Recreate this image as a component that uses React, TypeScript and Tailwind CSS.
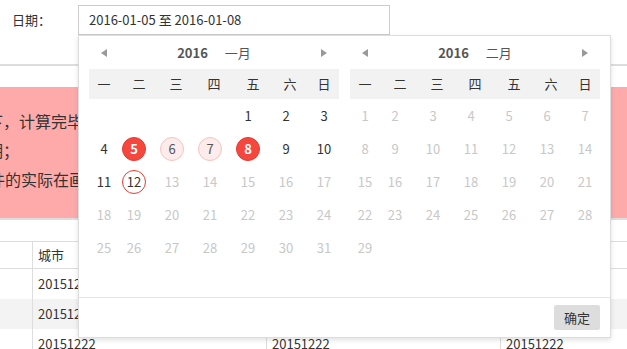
import React from "react";

type S = "empty" | "normal" | "disabled" | "start" | "range" | "today";

const FONT = "font-['Noto_Sans_CJK_SC','Noto_Sans',sans-serif]";

const dayMl = ["", "", "ml-2", "ml-2", "ml-2", "ml-2", "ml-2"];
const headMl = ["", "ml-[5px]", "ml-[7px]", "ml-[8px]", "ml-[9px]", "ml-[7px]", "ml-[4px]"];
const weekNames = ["一", "二", "三", "四", "五", "六", "日"];

function Day({ d, s, i }: { d: number | null; s: S; i: number }) {
  let cls = "";
  if (s === "start") cls = "bg-[#f5473e] border border-[#e63a30] text-white font-bold";
  else if (s === "range") cls = "bg-[#fdeceb] border border-[#f5c4be] text-[#555]";
  else if (s === "today") cls = "border border-[#e63a30] text-[#333]";
  else if (s === "normal") cls = "text-[#333]";
  else if (s === "disabled") cls = "text-[#c8c8c8]";
  return (
    <div className={`w-[30px] h-[33px] flex items-center justify-center ${dayMl[i]}`}>
      {d !== null && (
        <span className={`w-[24px] h-[24px] rounded-full flex items-center justify-center text-[13px] leading-none ${cls}`}>
          {d}
        </span>
      )}
    </div>
  );
}

function Arrow({ dir }: { dir: "l" | "r" }) {
  return (
    <svg width="6" height="8" viewBox="0 0 6 8">
      {dir === "l" ? <polygon points="6,0 6,8 0,4" fill="#999" /> : <polygon points="0,0 0,8 6,4" fill="#999" />}
    </svg>
  );
}

function buildMonth(startIdx: number, days: number, stateOf: (d: number) => S) {
  const cells: { d: number | null; s: S }[] = [];
  for (let i = 0; i < startIdx; i++) cells.push({ d: null, s: "empty" });
  for (let d = 1; d <= days; d++) cells.push({ d, s: stateOf(d) });
  while (cells.length % 7 !== 0) cells.push({ d: null, s: "empty" });
  const rows: { d: number | null; s: S }[][] = [];
  for (let i = 0; i < cells.length; i += 7) rows.push(cells.slice(i, i + 7));
  return rows;
}

function Panel({ month, rows }: { month: string; rows: { d: number | null; s: S }[][] }) {
  return (
    <div className="w-[250px]">
      <div className="h-[33px] flex items-center justify-between px-3">
        <Arrow dir="l" />
        <div className="flex items-center text-[13px] text-[#555]">
          <span className="font-bold">2016</span>
          <span className="ml-[17px]">{month}</span>
        </div>
        <Arrow dir="r" />
      </div>
      <div className="h-[30px] bg-[#f2f2f2] flex items-center">
        {weekNames.map((w, i) => (
          <div key={w} className={`w-[30px] text-center text-[13px] text-[#333] ${headMl[i]}`}>
            {w}
          </div>
        ))}
      </div>
      {rows.map((r, ri) => (
        <div key={ri} className="flex">
          {r.map((c, i) => (
            <Day key={i} d={c.d} s={c.s} i={i} />
          ))}
        </div>
      ))}
    </div>
  );
}

export default function App() {
  const jan = buildMonth(4, 31, (d) => {
    if (d === 5 || d === 8) return "start";
    if (d === 6 || d === 7) return "range";
    if (d === 12) return "today";
    if (d < 12) return "normal";
    return "disabled";
  });
  const feb = buildMonth(0, 29, () => "disabled");

  const cell = "px-[5px] flex items-center text-[13px] text-[#333] whitespace-nowrap overflow-hidden";
  const tableRow = "grid grid-cols-[33px_234px_234px_1fr]";

  return (
    <div className={`w-[627px] h-[349px] overflow-hidden bg-white ${FONT}`}>
      {/* top filter bar */}
      <div className="h-[66px] border-b-2 border-[#ddd] flex items-start pt-[5px] pl-[12px]">
        <div className="w-[66px] h-[30px] flex items-center text-[13px] text-[#333]">日期：</div>
        <div className="relative">
          <div className="w-[312px] h-[30px] border border-[#ccc] flex items-center pl-[10px] text-[13px] text-[#333]">
            2016-01-05 至 2016-01-08
          </div>
          {/* date range popup */}
          <div className="absolute left-0 top-full z-10 w-[533px] h-[303px] bg-white border border-[#ddd] shadow-[0_2px_5px_rgba(0,0,0,0.12)] flex flex-col">
            <div className="flex px-[10px] gap-[11px]">
              <Panel month="一月" rows={jan} />
              <Panel month="二月" rows={feb} />
            </div>
            <div className="mt-auto h-[40px] border-t border-[#e5e5e5] flex items-center justify-end pr-[10px]">
              <button className="w-[46px] h-[25px] rounded-[2px] bg-[#ddd] text-[13px] text-[#333] flex items-center justify-center">
                确定
              </button>
            </div>
          </div>
        </div>
      </div>

      {/* pink notice */}
      <div className="mt-[21px] h-[133px] bg-[#ffaaaa] border-b-2 border-[#ddd] pt-[20px] overflow-hidden">
        <div className="text-[16px] leading-[29px] text-[#333] whitespace-nowrap">
          <div className="-ml-[13px]">下，计算完毕后数据会保存</div>
          <div className="-ml-[13px]">期；</div>
          <div className="-ml-[11px]">件的实际在画面显示</div>
        </div>
      </div>

      {/* table */}
      <div className="mt-[21px] border-t border-[#ddd]">
        <div className={`${tableRow} h-[27px] border-b border-[#ddd]`}>
          <div className="border-r border-[#ddd]" />
          <div className={`${cell} border-r border-[#ddd]`}>城市</div>
          <div className={`${cell} border-r border-[#ddd]`}>日期</div>
          <div className={cell}>数量</div>
        </div>
        {[0, 1, 2].map((r) => (
          <div key={r} className={`${tableRow} h-[30px] ${r === 1 ? "bg-[#f3f3f3]" : "bg-white"}`}>
            <div className="border-r border-[#ddd]" />
            <div className={`${cell} border-r border-[#ddd]`}>20151222</div>
            <div className={`${cell} border-r border-[#ddd]`}>20151222</div>
            <div className={cell}>20151222</div>
          </div>
        ))}
      </div>
    </div>
  );
}
